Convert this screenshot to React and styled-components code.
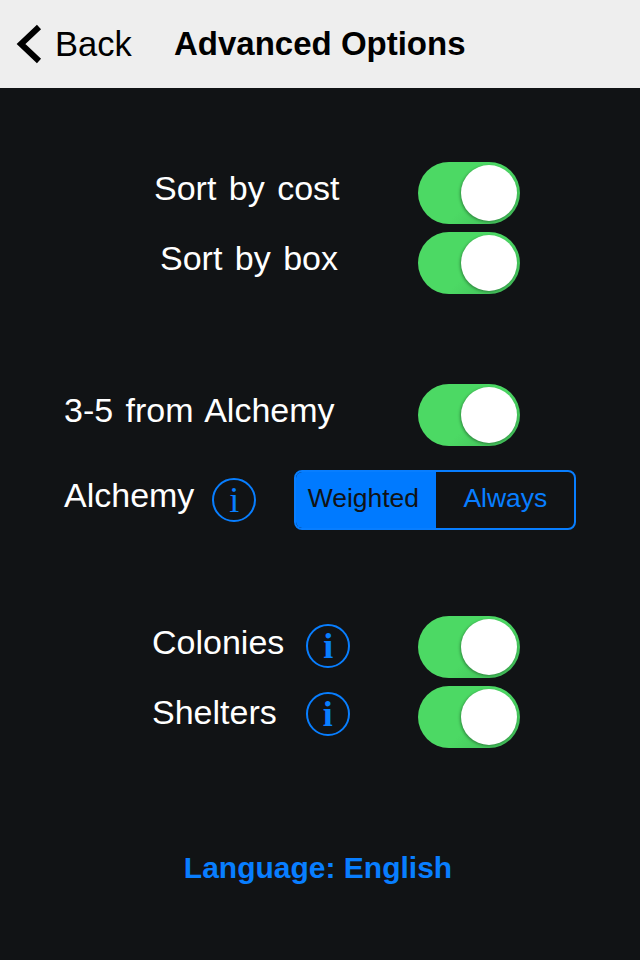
import styled, { createGlobalStyle } from "styled-components";

const GlobalStyle = createGlobalStyle`
  html, body {
    margin: 0;
    padding: 0;
    background: #111315;
  }
`;

const Screen = styled.div`
  width: 640px;
  height: 960px;
  overflow: hidden;
  background: #111315;
  color: #fff;
  font-family: "Liberation Sans", Arial, sans-serif;
`;

const NavBar = styled.header`
  height: 88px;
  display: flex;
  align-items: center;
  background: #eeeeee;
  color: #000;
  font-size: 34.5px;
`;

const BackButton = styled.div`
  display: flex;
  align-items: center;
  width: 174px;
  padding-left: 16px;
  box-sizing: border-box;
`;

const BackLabel = styled.span`
  margin-left: 13px;
  padding-top: 1px;
`;

const NavTitle = styled.h1`
  margin: 0;
  font-size: 33px;
  font-weight: 700;
`;

const Section = styled.section`
  margin-top: ${p => p.$top}px;
`;

const Row = styled.div`
  display: flex;
  align-items: center;
  height: ${p => p.$height || 62}px;
  margin-bottom: ${p => p.$bottom ?? 8}px;
  padding-left: ${p => p.$left}px;
`;

const Label = styled.span`
  font-size: 34px;
  word-spacing: 3px;
  line-height: 40px;
  padding-bottom: 10px;
  white-space: nowrap;
`;

const InfoButton = styled.span`
  display: flex;
  align-items: center;
  justify-content: center;
  width: 44px;
  height: 44px;
  margin-left: ${p => p.$gap}px;
  margin-bottom: ${p => p.$lift || 0}px;
  box-sizing: border-box;
  border: 2px solid #087eff;
  border-radius: 50%;
  color: #087eff;
  font-family: "Liberation Serif", serif;
  font-size: 36px;
  font-weight: ${p => (p.$thin ? 400 : 700)};
  line-height: 1;
`;

const ToggleTrack = styled.span`
  position: relative;
  display: block;
  width: 102px;
  height: 62px;
  margin-left: auto;
  margin-right: 120px;
  border-radius: 31px;
  background: linear-gradient(135deg, #4cd964 55%, #3fb756 100%);
`;

const ToggleKnob = styled.span`
  position: absolute;
  top: 3px;
  right: 3px;
  width: 56px;
  height: 56px;
  border-radius: 50%;
  background: #fff;
  box-shadow: -1px 1px 3px rgba(0, 0, 0, 0.35);
`;

const Segmented = styled.div`
  display: flex;
  width: 282px;
  height: 60px;
  margin-left: 38px;
  box-sizing: border-box;
  border: 2px solid #087eff;
  border-radius: 8px;
  overflow: hidden;
  font-size: 26.5px;
`;

const Segment = styled.div`
  display: flex;
  align-items: center;
  justify-content: center;
  width: ${p => p.$width}px;
  background: ${p => (p.$active ? "#007aff" : "transparent")};
  color: ${p => (p.$active ? "#111315" : "#087eff")};
  padding-bottom: 3px;
  padding-right: ${p => (p.$active ? 6 : 0)}px;
  box-sizing: border-box;
`;

const LanguageLink = styled.div`
  margin-top: 102px;
  padding-right: 4px;
  color: #087eff;
  font-size: 30px;
  font-weight: 700;
  line-height: 36px;
  text-align: center;
`;

const Toggle = () => (
  <ToggleTrack>
    <ToggleKnob />
  </ToggleTrack>
);

export default function App() {
  return (
    <Screen>
      <GlobalStyle />
      <NavBar>
        <BackButton>
          <svg width="26" height="40" viewBox="0 0 26 40">
            <path d="M23 3 L5 20 L23 37" fill="none" stroke="#000" strokeWidth="6" />
          </svg>
          <BackLabel>Back</BackLabel>
        </BackButton>
        <NavTitle>Advanced Options</NavTitle>
      </NavBar>

      <Section $top={74}>
        <Row $left={154}>
          <Label>Sort by cost</Label>
          <Toggle />
        </Row>
        <Row $left={160}>
          <Label>Sort by box</Label>
          <Toggle />
        </Row>
      </Section>

      <Section $top={90}>
        <Row $left={64} $bottom={24}>
          <Label>3-5 from Alchemy</Label>
          <Toggle />
        </Row>
        <Row $left={64} $height={60} $bottom={0}>
          <Label>Alchemy</Label>
          <InfoButton $gap={18} $thin>i</InfoButton>
          <Segmented>
            <Segment $active $width={140}>Weighted</Segment>
            <Segment $width={138}>Always</Segment>
          </Segmented>
        </Row>
      </Section>

      <Section $top={86}>
        <Row $left={152}>
          <Label>Colonies</Label>
          <InfoButton $gap={22} $lift={2}>i</InfoButton>
          <Toggle />
        </Row>
        <Row $left={152}>
          <Label>Shelters</Label>
          <InfoButton $gap={29} $lift={6}>i</InfoButton>
          <Toggle />
        </Row>
      </Section>

      <LanguageLink>Language: English</LanguageLink>
    </Screen>
  );
}
